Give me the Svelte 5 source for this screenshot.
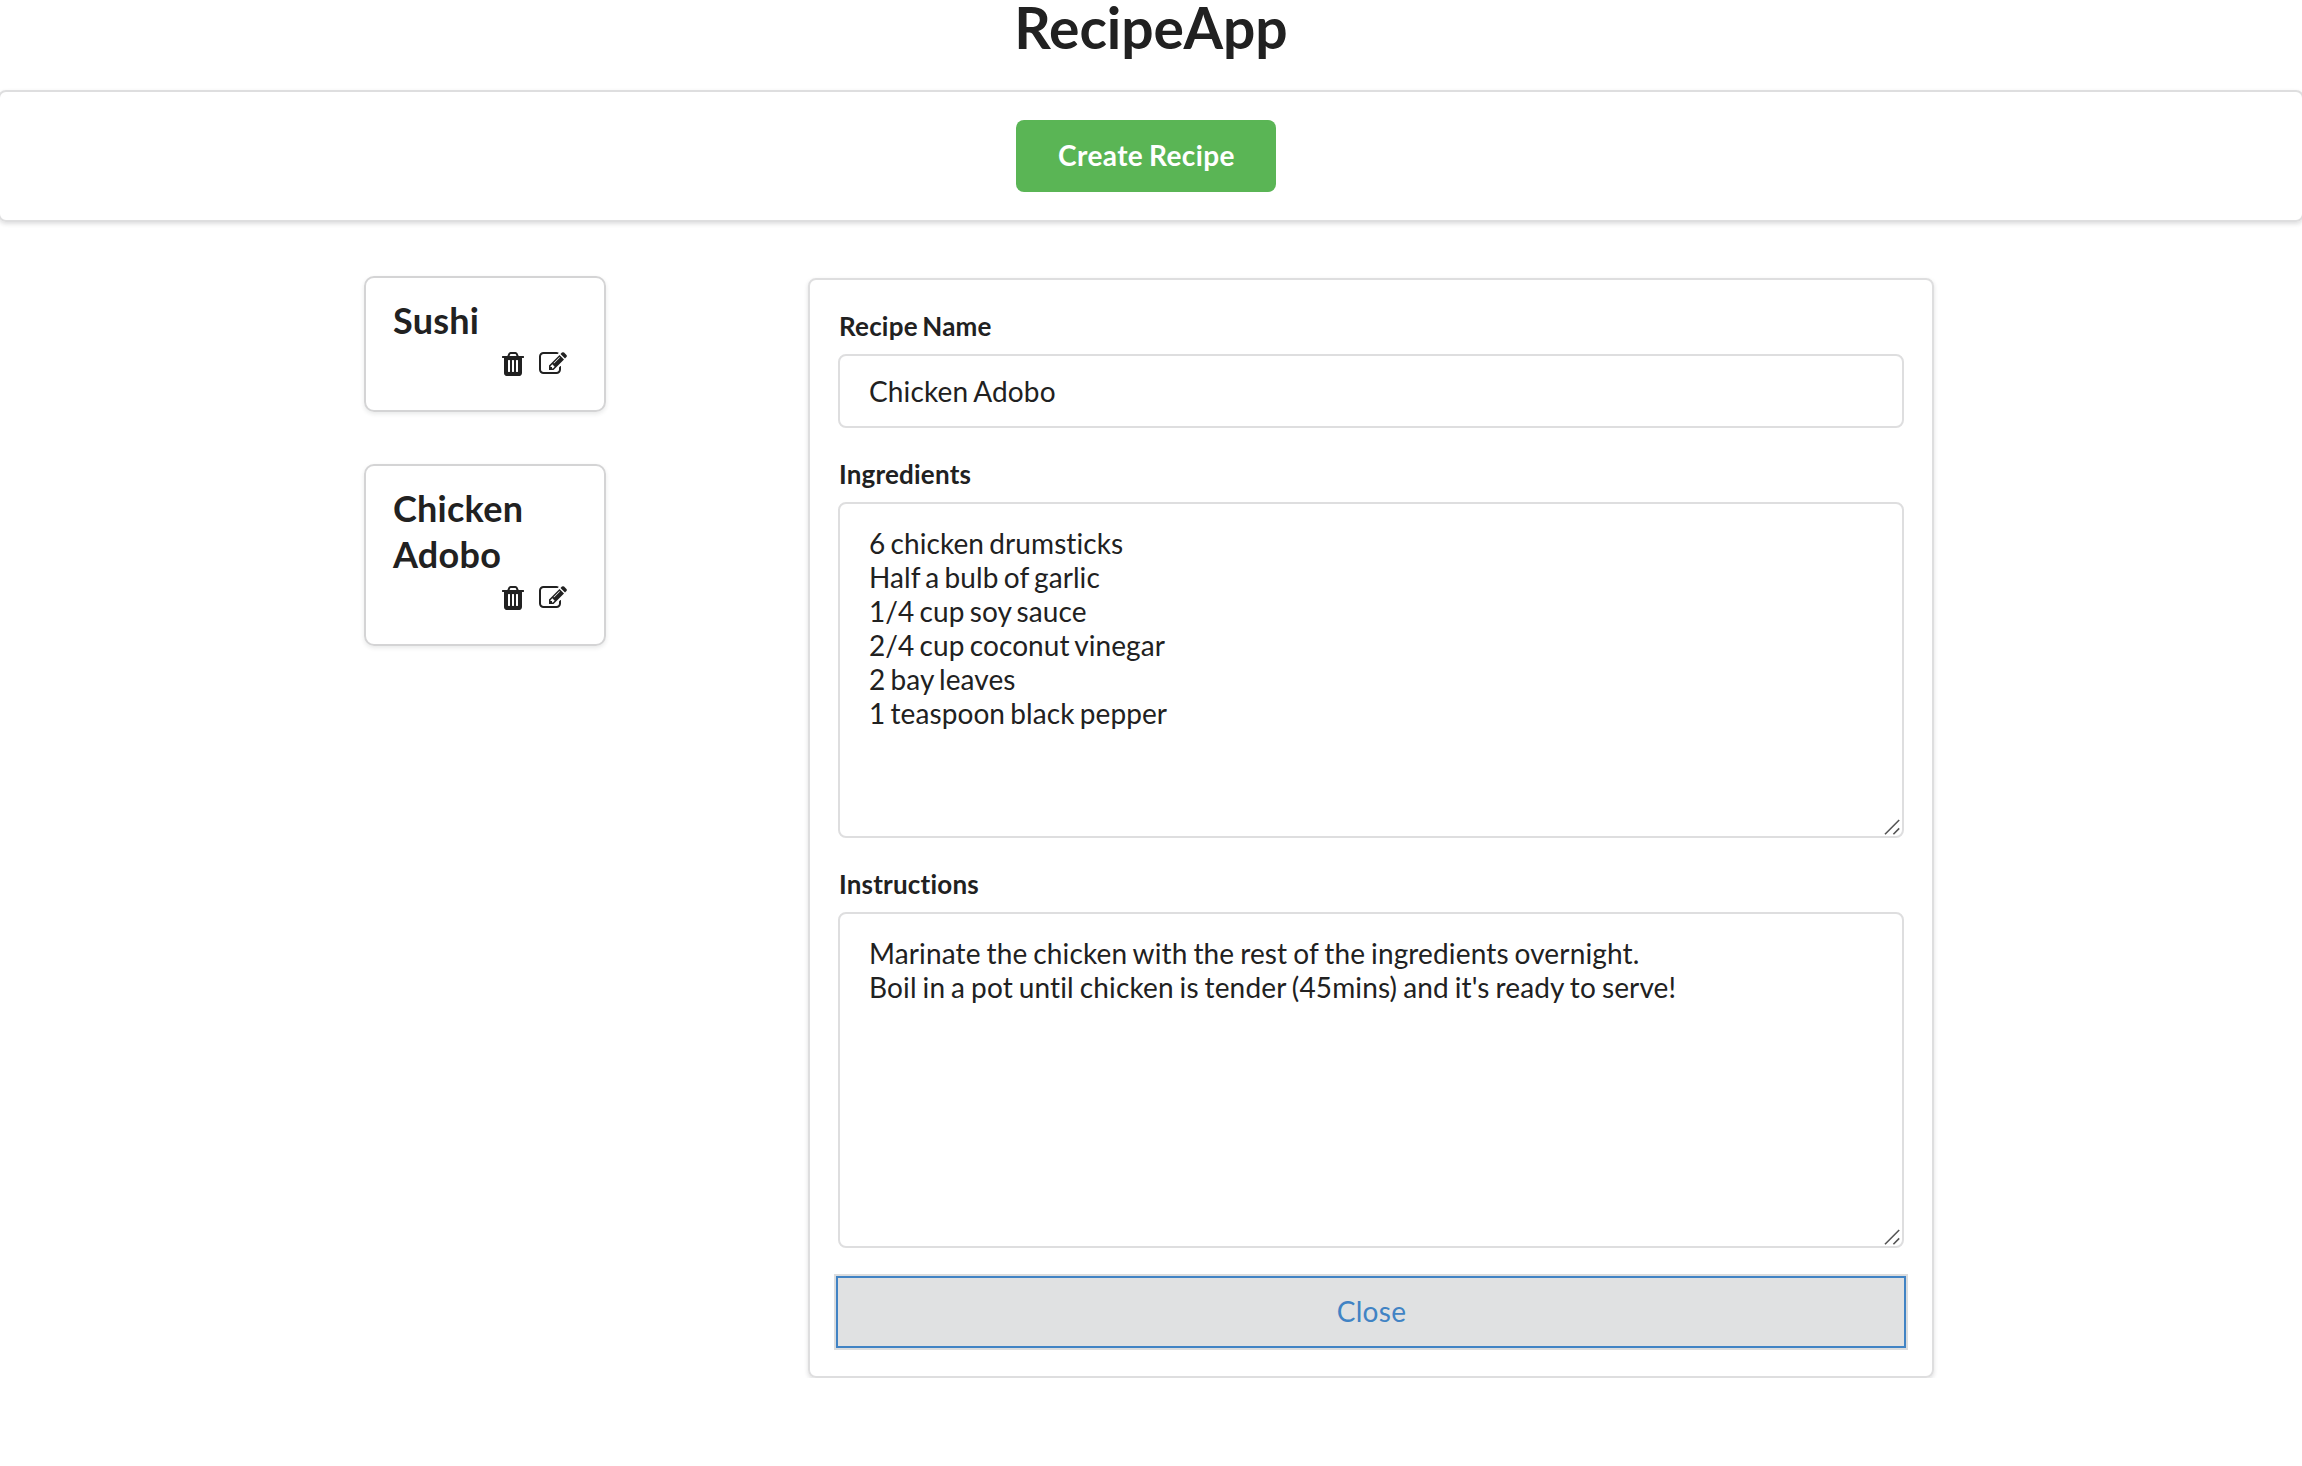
<script>
  const recipes = [
    {
      name: 'Sushi',
      ingredients: '',
      instructions: ''
    },
    {
      name: 'Chicken Adobo',
      ingredients:
        '6 chicken drumsticks\nHalf a bulb of garlic\n1/4 cup soy sauce\n2/4 cup coconut vinegar\n2 bay leaves\n1 teaspoon black pepper',
      instructions:
        "Marinate the chicken with the rest of the ingredients overnight.\nBoil in a pot until chicken is tender (45mins) and it's ready to serve!"
    }
  ];
  let selected = $state(1);
  const recipe = $derived(recipes[selected]);
</script>

{#snippet grip()}
  <svg class="grip" viewBox="0 0 16 16" aria-hidden="true">
    <path d="M1 15.2 15.2 1M9.4 15.2 15.2 9.4" />
  </svg>
{/snippet}

<h1>RecipeApp</h1>

<div class="toolbar">
  <button class="create" type="button">Create Recipe</button>
</div>

<main>
  <div class="list">
    {#each recipes as item, i}
      <article class="card">
        <h2>{item.name}</h2>
        <div class="actions">
          <button type="button" aria-label="Delete">
            <svg viewBox="0 0 1792 1792">
              <path
                d="M704 1376v-704q0-14-9-23t-23-9h-64q-14 0-23 9t-9 23v704q0 14 9 23t23 9h64q14 0 23-9t9-23zm256 0v-704q0-14-9-23t-23-9h-64q-14 0-23 9t-9 23v704q0 14 9 23t23 9h64q14 0 23-9t9-23zm256 0v-704q0-14-9-23t-23-9h-64q-14 0-23 9t-9 23v704q0 14 9 23t23 9h64q14 0 23-9t9-23zm-544-992h448l-48-117q-7-9-17-11h-317q-10 2-17 11zm928 32v64q0 14-9 23t-23 9h-96v948q0 83-47 143.5t-113 60.5h-832q-66 0-113-58.5t-47-141.5v-952h-96q-14 0-23-9t-9-23v-64q0-14 9-23t23-9h309l70-167q15-37 54-63t79-26h320q40 0 79 26t54 63l70 167h309q14 0 23 9t9 23z"
              />
            </svg>
          </button>
          <button type="button" aria-label="Edit" onclick={() => (selected = i)}>
            <svg viewBox="0 0 1792 1792">
              <path
                d="M888 1184l116-116-152-152-116 116v56h96v96h56zm440-720q-16-16-33 1l-350 350q-17 17-1 33t33-1l350-350q17-17 1-33zm80 594v190q0 119-84.5 203.5t-203.5 84.5h-832q-119 0-203.5-84.5t-84.5-203.5v-832q0-119 84.5-203.5t203.5-84.5h832q63 0 117 25 15 7 18 23 3 17-9 29l-49 49q-14 14-32 8-23-6-45-6h-832q-66 0-113 47t-47 113v832q0 66 47 113t113 47h832q66 0 113-47t47-113v-126q0-13 9-22l64-64q15-15 35-7t20 29zm-96-738l288 288-672 672h-288v-288zm444 132l-92 92-288-288 92-92q28-28 68-28t68 28l152 152q28 28 28 68t-28 68z"
              />
            </svg>
          </button>
        </div>
      </article>
    {/each}
  </div>

  <form class="panel">
    <label for="name">Recipe Name</label>
    <input id="name" type="text" value={recipe.name} />
    <label for="ingredients">Ingredients</label>
    <div class="area">
      <textarea id="ingredients" class="compact" value={recipe.ingredients}></textarea>
      {@render grip()}
    </div>
    <label for="instructions">Instructions</label>
    <div class="area">
      <textarea id="instructions" value={recipe.instructions}></textarea>
      {@render grip()}
    </div>
    <button class="close" type="button">Close</button>
  </form>
</main>

<style>
  :global(body) {
    margin: 0;
    background: #fff;
    color: #212121;
    font-family: Lato, 'Liberation Sans', sans-serif;
    font-size: 28px;
    overflow-x: hidden;
  }

  h1,
  h2 {
    margin: 0;
    font-weight: 700;
  }

  h1 {
    height: 90px;
    font-size: 57px;
    line-height: 54px;
    letter-spacing: -0.05px;
    text-align: center;
  }

  button,
  input,
  textarea {
    box-sizing: border-box;
    margin: 0;
    font-family: inherit;
    font-size: 28px;
    letter-spacing: 0.14px;
    word-spacing: -1.4px;
    color: inherit;
    outline: none;
  }

  .toolbar {
    box-sizing: border-box;
    height: 132px;
    margin: 0 -2px;
    padding: 28px 0 0 1016px;
    border: 2px solid #dededf;
    border-radius: 8px;
    box-shadow: 0 2px 4px rgba(34, 36, 38, 0.15);
  }

  .create {
    display: block;
    width: 260px;
    height: 72px;
    padding: 0 0 2px 1px;
    border: 0;
    border-radius: 8px;
    background: #5ab555;
    color: #fff;
    font-weight: 700;
    line-height: 28px;
    letter-spacing: 0.4px;
  }

  main {
    display: flex;
    align-items: flex-start;
    gap: 202px;
    padding: 54px 0 0 364px;
  }

  .list {
    display: flex;
    flex-direction: column;
    gap: 52px;
    width: 242px;
  }

  .card {
    box-sizing: border-box;
    padding: 19px 8px 32px 27px;
    border: 2px solid #d4d4d5;
    border-radius: 10px;
    box-shadow: 0 2px 4px rgba(34, 36, 38, 0.1);
  }

  h2 {
    font-size: 36px;
    line-height: 46px;
    letter-spacing: 0.25px;
  }

  .actions {
    display: flex;
    justify-content: flex-end;
    gap: 11.5px;
    height: 35px;
    padding: 7px 29.5px 0 0;
    box-sizing: border-box;
  }

  .actions button {
    width: 28px;
    height: 28px;
    padding: 0;
    border: 0;
    background: none;
  }

  .actions svg {
    display: block;
    width: 28px;
    height: 28px;
    fill: #212121;
  }

  .panel {
    box-sizing: border-box;
    display: flex;
    flex-direction: column;
    width: 1126px;
    height: 1100px;
    margin-top: 2px;
    padding: 28px 28px 0;
    border: 2px solid #dededf;
    border-radius: 8px;
    box-shadow: 0 2px 4px rgba(34, 36, 38, 0.15);
  }

  label {
    height: 46px;
    padding-left: 1px;
    font-size: 26px;
    font-weight: 700;
    line-height: 37px;
    letter-spacing: 0.2px;
    word-spacing: -2px;
  }

  input,
  textarea {
    display: block;
    width: 100%;
    border: 2px solid #dededf;
    border-radius: 8px;
    background: #fff;
    line-height: 34px;
  }

  input {
    height: 74px;
    margin-bottom: 28px;
    padding: 0 28px 0 29px;
  }

  textarea {
    height: 336px;
    padding: 22px 28px 22px 29px;
    resize: none;
  }

  .compact {
    letter-spacing: 0.08px;
    word-spacing: -2px;
  }

  .area {
    position: relative;
    margin-bottom: 28px;
  }

  /* Resize grip in the lower right corner of a text area */
  .grip {
    position: absolute;
    right: 4px;
    bottom: 3px;
    width: 16px;
    height: 16px;
    fill: none;
    stroke: #555;
    stroke-width: 1.6;
  }

  .close {
    height: 72px;
    margin: 0 -2px;
    padding: 0 0 2px 1px;
    border: 2px solid #4183c4;
    background: #e0e1e2;
    box-shadow: 0 0 0 2px #dcddde;
    color: #4183c4;
    letter-spacing: 0.3px;
  }
</style>
